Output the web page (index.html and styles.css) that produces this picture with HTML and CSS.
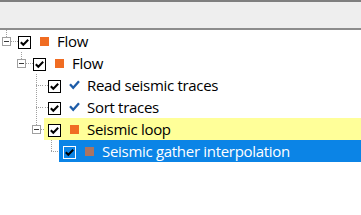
FILE: index.html
```html
<!DOCTYPE html>
<html>
<head>
<meta charset="utf-8">
<link rel="stylesheet" href="styles.css">
</head>
<body>
<div class="header"></div>
<div class="tree">
  <div class="row">
    <span class="exp node-top"><span class="box"></span></span>
    <div class="body line">
      <svg class="cb" width="13" height="13" viewBox="0 0 13 13"><rect x="0.5" y="0.5" width="12" height="12" fill="#fff" stroke="#000"/><path d="M2.8 6.2 L5.3 8.8 L10.2 3.8" fill="none" stroke="#000" stroke-width="2"/></svg>
      <span class="sq orange"></span>
      <span class="label">Flow</span>
    </div>
  </div>
  <div class="row">
    <span class="ind"></span>
    <span class="exp node-top"><span class="box"></span></span>
    <div class="body line">
      <svg class="cb" width="13" height="13" viewBox="0 0 13 13"><rect x="0.5" y="0.5" width="12" height="12" fill="#fff" stroke="#000"/><path d="M2.8 6.2 L5.3 8.8 L10.2 3.8" fill="none" stroke="#000" stroke-width="2"/></svg>
      <span class="sq orange"></span>
      <span class="label">Flow</span>
    </div>
  </div>
  <div class="row">
    <span class="ind"></span><span class="ind"></span>
    <span class="exp leaf-mid"></span>
    <div class="body line">
      <svg class="cb" width="13" height="13" viewBox="0 0 13 13"><rect x="0.5" y="0.5" width="12" height="12" fill="#fff" stroke="#000"/><path d="M2.8 6.2 L5.3 8.8 L10.2 3.8" fill="none" stroke="#000" stroke-width="2"/></svg>
      <svg class="tick" width="11" height="10" viewBox="0 0 11 10"><path d="M1 4.2 L4.2 7.8 L10 1.2" fill="none" stroke="#1d5ca8" stroke-width="2.3"/></svg>
      <span class="label">Read seismic traces</span>
    </div>
  </div>
  <div class="row">
    <span class="ind"></span><span class="ind"></span>
    <span class="exp leaf-mid"></span>
    <div class="body line">
      <svg class="cb" width="13" height="13" viewBox="0 0 13 13"><rect x="0.5" y="0.5" width="12" height="12" fill="#fff" stroke="#000"/><path d="M2.8 6.2 L5.3 8.8 L10.2 3.8" fill="none" stroke="#000" stroke-width="2"/></svg>
      <svg class="tick" width="11" height="10" viewBox="0 0 11 10"><path d="M1 4.2 L4.2 7.8 L10 1.2" fill="none" stroke="#1d5ca8" stroke-width="2.3"/></svg>
      <span class="label">Sort traces</span>
    </div>
  </div>
  <div class="row">
    <span class="ind"></span><span class="ind"></span>
    <span class="exp node-top"><span class="box"></span></span>
    <div class="body hl">
      <svg class="cb" width="13" height="13" viewBox="0 0 13 13"><rect x="0.5" y="0.5" width="12" height="12" fill="#fff" stroke="#000"/><path d="M2.8 6.2 L5.3 8.8 L10.2 3.8" fill="none" stroke="#000" stroke-width="2"/></svg>
      <span class="sq orange"></span>
      <span class="label">Seismic loop</span>
    </div>
  </div>
  <div class="row">
    <span class="ind"></span><span class="ind"></span><span class="ind"></span>
    <span class="exp leaf-last"></span>
    <div class="body sel">
      <svg class="cb" width="13" height="13" viewBox="0 0 13 13"><rect x="0.5" y="0.5" width="12" height="12" fill="#0b84e6" stroke="#fff"/><path d="M2.8 6.2 L5.3 8.8 L10.2 3.8" fill="none" stroke="#000" stroke-width="2"/></svg>
      <span class="sq brown"></span>
      <span class="label">Seismic gather interpolation</span>
    </div>
  </div>
</div>
</body>
</html>
```
FILE: styles.css
```css
html, body {
  margin: 0;
  padding: 0;
  background: #fff;
}
body {
  width: 361px;
  height: 215px;
  overflow: hidden;
  font-family: "Open Sans", "Noto Sans", sans-serif;
}
.header {
  height: 26px;
  background: #eeeeee;
  border-top: 2px solid #7f7f7f;
  border-bottom: 2px solid #8c8c8c;
}
.tree {
  display: flex;
  flex-direction: column;
}
.row {
  display: flex;
  height: 22px;
}
.ind {
  flex: 0 0 15px;
}
.exp {
  flex: 0 0 14px;
  display: flex;
  align-items: flex-start;
  background-repeat: no-repeat;
}
.node-top {
  background-image:
    repeating-linear-gradient(to bottom, #a0a0a0 0 1px, transparent 1px 2px),
    repeating-linear-gradient(to right, #a0a0a0 0 1px, transparent 1px 2px);
  background-size: 1px 7px, 3px 1px;
  background-position: 6px 0, 11px 11px;
}
.leaf-mid {
  background-image:
    repeating-linear-gradient(to bottom, #a0a0a0 0 1px, transparent 1px 2px),
    repeating-linear-gradient(to right, #a0a0a0 0 1px, transparent 1px 2px);
  background-size: 1px 22px, 8px 1px;
  background-position: 6px 0, 6px 11px;
}
.leaf-last {
  background-image:
    repeating-linear-gradient(to bottom, #a0a0a0 0 1px, transparent 1px 2px),
    repeating-linear-gradient(to right, #a0a0a0 0 1px, transparent 1px 2px);
  background-size: 1px 12px, 8px 1px;
  background-position: 6px 0, 6px 11px;
}
.box {
  box-sizing: border-box;
  width: 9px;
  height: 9px;
  margin: 7px 0 0 2px;
  border: 1px solid #a0a0a0;
  background: #fff;
  display: flex;
  align-items: center;
  justify-content: center;
}
.box::before {
  content: "";
  width: 5px;
  height: 1px;
  background: #3a3a3a;
}
.body {
  flex: 1;
  display: flex;
  align-items: flex-start;
  padding-left: 4px;
  background-repeat: no-repeat;
}
.body.line {
  background-image: repeating-linear-gradient(to right, transparent 0 1px, #a0a0a0 1px 2px);
  background-size: 4px 1px;
  background-position: 0 11px;
}
.hl {
  background: #ffff99;
}
.sel {
  background: #0b84e6;
  color: #fff;
}
.cb {
  flex: 0 0 13px;
  margin-top: 6px;
}
.sq {
  flex: 0 0 9px;
  width: 9px;
  height: 9px;
  margin: 7px 8px 0 9px;
}
.orange {
  background: #f06c22;
}
.brown {
  background: #ab7462;
}
.tick {
  flex: 0 0 11px;
  margin: 6px 7px 0 8px;
}
.label {
  font-size: 15px;
  letter-spacing: -0.3px;
  line-height: 22px;
  white-space: nowrap;
  color: inherit;
}
.row .body:not(.sel) .label {
  color: #000;
}
```
